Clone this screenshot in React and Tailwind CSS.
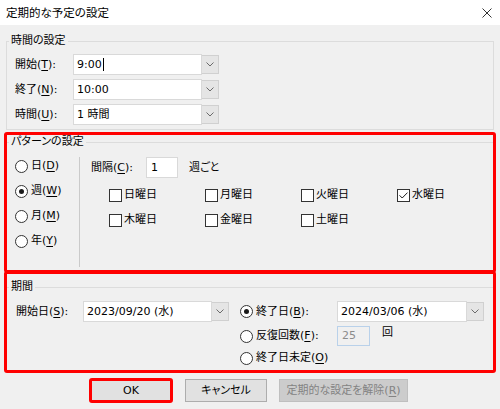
import { useState } from "react";

// mnemonic key inside parentheses, e.g. 開始(T)
const Key = ({ children }) => (
  <>
    (<u className="underline-offset-[2px]">{children}</u>)
  </>
);

const Chevron = () => (
  <svg width="8" height="5" viewBox="0 0 8 5" fill="none">
    <path d="M0.5 0.5L4 4L7.5 0.5" stroke="#6b6b6b" strokeWidth="1" />
  </svg>
);

const Combo = ({ value, width, caret }) => (
  <div className="flex h-[21px] items-stretch">
    <div className={`flex items-center border border-[#d9d9d9] bg-white pl-[3px] ${width}`}>
      <span>{value}</span>
      {caret && <span className="ml-px h-[13px] w-px bg-black" />}
    </div>
    <div className="my-px flex w-[17px] items-center justify-center border border-l-0 border-[#d0d0d0] bg-[#e5e5e5]">
      <Chevron />
    </div>
  </div>
);

const Radio = ({ checked }) => (
  <span className="flex h-[13px] w-[13px] shrink-0 items-center justify-center rounded-full border border-[#333333] bg-white">
    {checked && <span className="h-[5px] w-[5px] rounded-full bg-[#1a1a1a]" />}
  </span>
);

const Check = ({ checked }) => (
  <span className="flex h-[13px] w-[13px] shrink-0 items-center justify-center border border-[#333333] bg-white">
    {checked && (
      <svg width="9" height="7" viewBox="0 0 9 7" fill="none">
        <path d="M0.5 3.3L3.2 6L8.5 0.6" stroke="#1a1a1a" strokeWidth="1" />
      </svg>
    )}
  </span>
);

const TimeRow = ({ label, k, value, caret }) => (
  <div className="flex h-[21px] items-center">
    <span className="w-[58px]">
      {label}
      <Key>{k}</Key>:
    </span>
    <Combo value={value} width="w-[129px]" caret={caret} />
  </div>
);

const patterns = [
  { label: "日", k: "D" },
  { label: "週", k: "W" },
  { label: "月", k: "M" },
  { label: "年", k: "Y" },
];

const weekdays = [
  { label: "日曜日", checked: false },
  { label: "月曜日", checked: false },
  { label: "火曜日", checked: false },
  { label: "水曜日", checked: true },
  { label: "木曜日", checked: false },
  { label: "金曜日", checked: false },
  { label: "土曜日", checked: false },
];

export default function App() {
  const [pattern] = useState("W");

  return (
    <div className="flex h-[409px] w-[500px] flex-col overflow-hidden bg-[#f0f0f0] font-['DejaVu_Sans','Noto_Sans_CJK_JP',sans-serif] text-[11px] leading-[14px] text-black [font-feature-settings:'palt']">
      {/* title bar */}
      <div className="flex h-[25px] shrink-0 items-center justify-between bg-white pl-[6px] pr-[8px]">
        <span className="text-[11.5px]">定期的な予定の設定</span>
        <svg width="10" height="10" viewBox="0 0 10 10" fill="none">
          <path d="M0.5 0.5L9.5 9.5M9.5 0.5L0.5 9.5" stroke="#333333" strokeWidth="1" />
        </svg>
      </div>

      {/* 時間の設定 */}
      <fieldset className="mx-[6px] mt-[8px] border border-[#dcdcdc]">
        <legend className="ml-[2px] px-[2px] leading-[16px]">時間の設定</legend>
        <div className="flex flex-col gap-[4px] pb-[4px] pl-[8px] pt-[5px]">
          <TimeRow label="開始" k="T" value="9:00" caret />
          <TimeRow label="終了" k="N" value="10:00" />
          <TimeRow label="時間" k="U" value="1 時間" />
        </div>
      </fieldset>

      {/* パターンの設定 */}
      <div className="mx-[4px] mt-[2px] h-[141px] shrink-0 rounded-[3px] border-[3px] border-[#ff0000]">
        <fieldset className="h-full border-t border-[#dcdcdc]">
          <legend className="ml-[2px] px-[2px] leading-[14px]">パターンの設定</legend>
          <div className="flex h-[121px]">
            <div className="flex w-[72px] flex-col gap-[5px] pl-[8px] pt-[7px]">
              {patterns.map((p) => (
                <div key={p.k} className="flex h-[20px] items-center gap-[3px]">
                  <Radio checked={pattern === p.k} />
                  <span>
                    {p.label}
                    <Key>{p.k}</Key>
                  </span>
                </div>
              ))}
            </div>
            <div className="mb-[3px] mt-[8px] w-px bg-[#cacaca]" />
            <div className="flex flex-col pl-[11px] pt-[8px]">
              <div className="flex h-[21px] items-center">
                <span className="w-[55px]">
                  間隔<Key>C</Key>:
                </span>
                <div className="flex h-[21px] w-[32px] items-center border border-[#d9d9d9] bg-white pl-[4px]">1</div>
                <span className="ml-[11px]">週ごと</span>
              </div>
              <div className="mt-[7px] grid grid-cols-[96px_96px_96px_80px] gap-y-[5px] pl-[18px]">
                {weekdays.map((d) => (
                  <div key={d.label} className="flex h-[20px] items-center gap-[2px]">
                    <Check checked={d.checked} />
                    <span>{d.label}</span>
                  </div>
                ))}
              </div>
            </div>
          </div>
        </fieldset>
      </div>

      {/* 期間 */}
      <div className="mx-[4px] -mt-[2px] h-[102px] shrink-0 rounded-[3px] border-[3px] border-[#ff0000]">
        <fieldset className="mt-[6px] border-t border-[#dcdcdc]">
          <legend className="ml-[2px] px-[2px] leading-[14px]">期間</legend>
          <div className="flex pl-[9px] pt-[7px]">
            <div className="flex h-[21px] items-center">
              <span className="w-[67px]">
                開始日<Key>S</Key>:
              </span>
              <Combo value="2023/09/20 (水)" width="w-[129px]" />
            </div>
            <div className="ml-[11px] flex flex-col">
              <div className="flex h-[21px] items-center">
                <Radio checked />
                <span className="ml-[3px] w-[81px]">
                  終了日<Key>B</Key>:
                </span>
                <Combo value="2024/03/06 (水)" width="w-[130px]" />
              </div>
              <div className="mt-[4px] flex h-[20px] items-center">
                <Radio />
                <span className="ml-[3px] w-[81px]">
                  反復回数<Key>F</Key>:
                </span>
                <div className="flex h-[20px] w-[33px] items-center border border-[#b9d1ea] pl-[4px] text-[#8c8c8c]">25</div>
                <span className="ml-[12px] self-start">回</span>
              </div>
              <div className="mt-[2px] flex h-[20px] items-center">
                <Radio />
                <span className="ml-[3px]">
                  終了日未定<Key>O</Key>
                </span>
              </div>
            </div>
          </div>
        </fieldset>
      </div>

      {/* buttons */}
      <div className="mt-[5px] flex items-center gap-[12px] pl-[89px]">
        <button className="flex h-[25px] w-[84px] items-center justify-center rounded-[3px] border-[3px] border-[#ff0000] bg-[#e1e1e1]">
          OK
        </button>
        <button className="flex h-[23px] w-[82px] items-center justify-center border border-[#adadad] bg-[#e1e1e1]">
          キャンセル
        </button>
        <button disabled className="flex h-[23px] w-[129px] items-center justify-center border border-[#bfbfbf] bg-[#cccccc] text-[#838383]">
          定期的な設定を解除<Key>R</Key>
        </button>
      </div>
    </div>
  );
}
